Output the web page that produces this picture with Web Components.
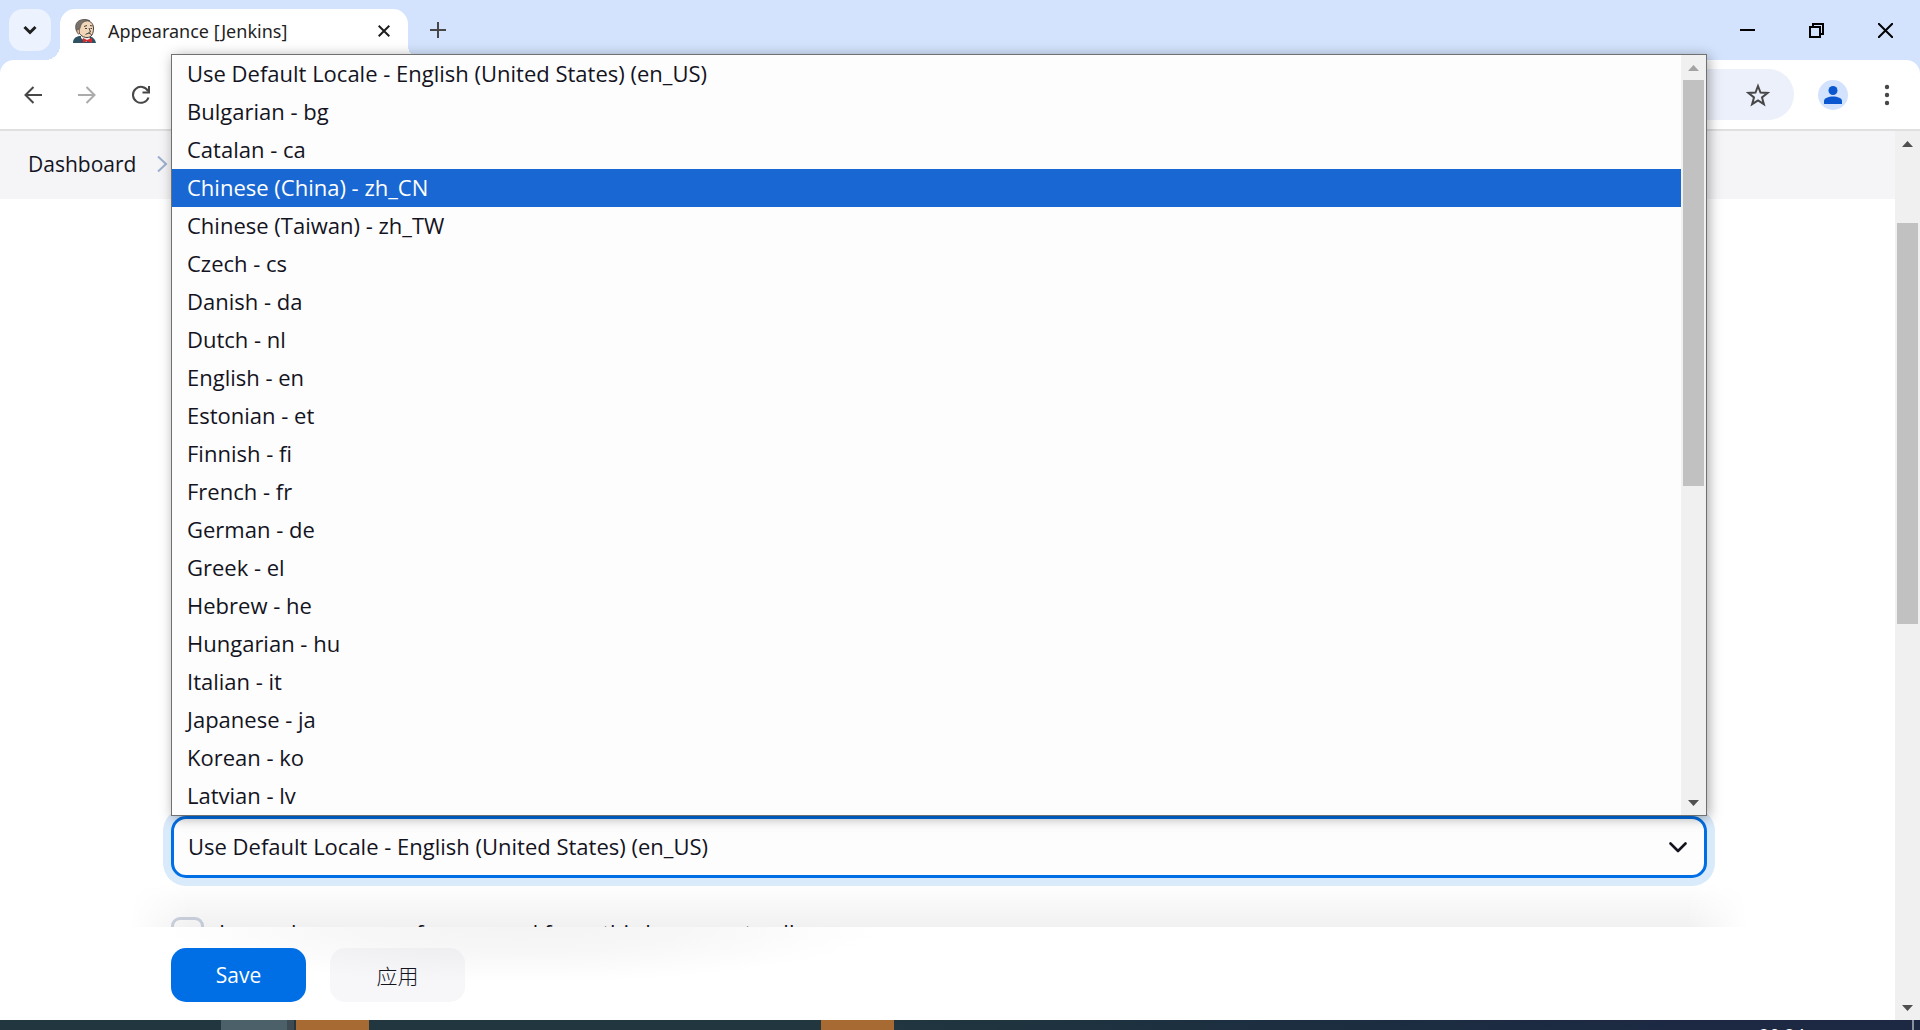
<!DOCTYPE html>
<html lang="en">
<head>
<meta charset="UTF-8">
<title>Appearance [Jenkins]</title>
<style>
    html, body {
        margin: 0;
        height: 100%;
        overflow: hidden;
    }
    body {
        display: flex;
        flex-direction: column;
        background: #d3e3fd;
        color: #14141f;
        font-family: "Open Sans", "Noto Sans", "Noto Sans CJK SC", sans-serif;
        font-size: 22px;
    }
    jenkins-page {
        flex: 1;
    }
</style>
</head>
<body>
<tab-strip><browser-tab>Appearance [Jenkins]</browser-tab></tab-strip>
<browser-toolbar></browser-toolbar>
<jenkins-page>
    <bread-crumbs slot="crumbs"><a href="#">Dashboard</a></bread-crumbs>
    <locale-select></locale-select>
    <check-row>Ignore browser preference and force this language to all users</check-row>
    <page-button slot="actions" primary>Save</page-button>
    <page-button slot="actions">应用</page-button>
</jenkins-page>
<task-bar></task-bar>

<script>
const LOCALES = [
    'Use Default Locale - English (United States) (en_US)', 'Bulgarian - bg', 'Catalan - ca',
    'Chinese (China) - zh_CN', 'Chinese (Taiwan) - zh_TW', 'Czech - cs', 'Danish - da',
    'Dutch - nl', 'English - en', 'Estonian - et', 'Finnish - fi', 'French - fr',
    'German - de', 'Greek - el', 'Hebrew - he', 'Hungarian - hu', 'Italian - it',
    'Japanese - ja', 'Korean - ko', 'Latvian - lv'
];

const BUTTON_RESET = `
    button {
        display: flex;
        align-items: center;
        justify-content: center;
        padding: 0;
        border: 0;
        background: none;
        font: inherit;
        color: inherit;
    }
    svg { display: block; }
`;

class BaseElement extends HTMLElement {
    constructor() {
        super();
        this.attachShadow({ mode: 'open' });
    }

    connectedCallback() {
        this.shadowRoot.innerHTML = this.render();
    }
}

class TabStrip extends BaseElement {
    render() {
        return `
            <style>
                ${BUTTON_RESET}
                :host {
                    display: flex;
                    height: 60px;
                    box-sizing: border-box;
                    padding: 9px 0 0 9px;
                    color: #1f1f1f;
                }
                .search {
                    width: 42px;
                    height: 42px;
                    margin-right: 9px;
                    border-radius: 14px;
                    background: #ecf3fe;
                }
                .add { width: 60px; height: 42px; }
                .controls { display: flex; margin-left: auto; height: 42px; color: #000; }
                .controls button { width: 69px; }
            </style>
            <button class="search" aria-label="Search tabs">
                <svg width="14" height="10" viewBox="0 0 14 10" fill="none" stroke="currentColor" stroke-width="3"><path d="M1.5 2l5.500 5.500L12.500 2"/></svg>
            </button>
            <slot></slot>
            <button class="add" aria-label="New tab">
                <svg width="16" height="16" viewBox="0 0 16 16" stroke="#474747" stroke-width="2"><path d="M8 0v16M0 8h16"/></svg>
            </button>
            <div class="controls">
                <button aria-label="Minimize"><svg width="15" height="15" stroke="currentColor" stroke-width="2"><path d="M0 7h15"/></svg></button>
                <button aria-label="Restore"><svg width="15" height="15" fill="none" stroke="currentColor" stroke-width="2"><path d="M1 4h10v10H1zM4 4V1h10v10h-3"/></svg></button>
                <button aria-label="Close"><svg width="15" height="15" stroke="currentColor" stroke-width="2"><path d="M0 0l15 15M15 0L0 15"/></svg></button>
            </div>
        `;
    }
}

class BrowserTab extends BaseElement {
    render() {
        return `
            <style>
                ${BUTTON_RESET}
                :host {
                    position: relative;
                    display: flex;
                    align-items: center;
                    width: 348px;
                    height: 51px;
                    box-sizing: border-box;
                    padding: 0 14px 8px 13px;
                    border-radius: 15px 15px 0 0;
                    background: #fff;
                    font-family: "Noto Sans", "Open Sans", sans-serif;
                    font-size: 18px;
                }
                /* flared corners where the tab meets the toolbar */
                :host::before, :host::after {
                    content: "";
                    position: absolute;
                    bottom: 0;
                    width: 15px;
                    height: 15px;
                }
                :host::before { right: 100%; background: radial-gradient(circle at 0 0, transparent 15px, #fff 15px); }
                :host::after { left: 100%; background: radial-gradient(circle at 100% 0, transparent 15px, #fff 15px); }
                span { flex: 1; margin-left: 12px; }
                button { width: 20px; height: 20px; }
            </style>
            <svg width="23" height="24" viewBox="0 0 23 24">
                <path d="M0 24c0-4 2-6 6-7l10 0c4 1 6 3 7 7z" fill="#2f5263"/>
                <path d="M8 16h8l1 4-4 3-5-4z" fill="#f0ede8"/>
                <path d="M4 8C4 3 8 1 12 1s8.500 3 8.500 8c0 6-2 9.500-6.500 9.500-5 0-9-4-10-10.500z" fill="#f0d5b8" stroke="#4a423c"/>
                <path d="M3 11C1 4 6 0 12 .5c2 0 4 .5 5 1.500-4-.5-7 .5-8.500 3C7.500 6.500 7.500 9 6 11l-1 3z" fill="#77726c" stroke="#4a423c" stroke-width=".6"/>
                <path d="M4 10.500c1.500-1 2.500 0 2.500 2s0 2.500-1 2.500-2-2.500-1.500-4.500z" fill="#e5bd99" stroke="#4a423c" stroke-width=".7"/>
                <path d="M11 7.500l3-1M17 6.500l2.500.5M12 9.500h2M17.500 9.500h1.500M16 9l1.500 4-2 .5M12.500 15.500c2-1.500 4-1.500 6 0" fill="none" stroke="#4a423c"/>
                <path d="M10 19l4 2 5-2v5l-5-2-4 2z" fill="#d9282e"/>
            </svg>
            <span><slot></slot></span>
            <button aria-label="Close tab">
                <svg width="12" height="12" viewBox="0 0 12 12" stroke="#1f1f1f" stroke-width="2"><path d="M.7.7l10.600 10.600M11.300.7L.7 11.300"/></svg>
            </button>
        `;
    }
}

class BrowserToolbar extends BaseElement {
    render() {
        return `
            <style>
                ${BUTTON_RESET}
                :host {
                    display: flex;
                    align-items: center;
                    height: 71px;
                    box-sizing: border-box;
                    padding: 0 6px;
                    border-bottom: 2px solid #e0e0e0;
                    border-radius: 14px 14px 0 0;
                    background: #fff;
                    color: #474747;
                }
                .nav { width: 54px; height: 54px; }
                .nav:disabled { color: #ababab; }
                .address {
                    display: flex;
                    flex: 1;
                    height: 51px;
                    margin-left: 6px;
                    margin-right: 12px;
                    border-radius: 26px;
                    background: #ecf0fa;
                }
                input { flex: 1; min-width: 0; border: 0; background: none; font: inherit; padding: 0 24px; outline: 0; }
                .star { width: 50px; margin-right: 11px; }
                .profile { width: 54px; height: 54px; }
            </style>
            <button class="nav" aria-label="Back">
                <svg width="18" height="18" viewBox="0 0 18 18" fill="none" stroke="currentColor" stroke-width="2"><path d="M18 9H1.500M9.500 1l-8 8 8 8"/></svg>
            </button>
            <button class="nav" aria-label="Forward" disabled>
                <svg width="18" height="18" viewBox="0 0 18 18" fill="none" stroke="currentColor" stroke-width="2"><path d="M0 9h16.500M8.500 1l8 8-8 8"/></svg>
            </button>
            <button class="nav" aria-label="Reload">
                <svg width="20" height="20" viewBox="0 0 20 20" fill="none" stroke="currentColor" stroke-width="2"><path d="M17.500 12.500A8 8 0 1 1 17 6M18 1v6.500h-6.500"/></svg>
            </button>
            <div class="address">
                <input type="text" aria-label="Address">
                <button class="star" aria-label="Bookmark">
                    <svg width="24" height="24" viewBox="0 0 24 24" fill="none" stroke="currentColor" stroke-width="2"><path d="M12 3l2.500 6.500 7 .4-5.500 4.500 1.900 6.800-5.900-3.800-5.900 3.800L8 14.400 2.500 9.900l7-.4z"/></svg>
                </button>
            </div>
            <button class="profile" aria-label="Profile">
                <svg width="30" height="30" viewBox="0 0 30 30"><circle cx="15" cy="15" r="15" fill="#d3e3fd"/><g fill="#0b57d0"><circle cx="15" cy="10.500" r="4.500"/><path d="M6 24v-3c0-6 18-6 18 0v3z"/></g></svg>
            </button>
            <button class="nav" aria-label="Menu">
                <svg width="6" height="22" viewBox="0 0 6 22" fill="currentColor"><circle cx="3" cy="3" r="2.200"/><circle cx="3" cy="11" r="2.200"/><circle cx="3" cy="19" r="2.200"/></svg>
            </button>
        `;
    }
}

class ScrollBar extends BaseElement {
    render() {
        const before = this.getAttribute('before');
        const size = this.getAttribute('size');
        const after = this.getAttribute('after');
        return `
            <style>
                ${BUTTON_RESET}
                :host {
                    display: flex;
                    flex-direction: column;
                    flex: none;
                    width: 25px;
                    background: #f0f0f0;
                    color: #505050;
                }
                button { width: 25px; height: 25px; flex: none; }
                button:disabled { color: #a3a3a3; }
                .before { flex: ${before}; }
                .thumb { flex: ${size}; margin: 0 2px; background: #c1c1c1; }
                .after { flex: ${after}; }
            </style>
            <button aria-label="Scroll up" ${before === '0' ? 'disabled' : ''}>
                <svg width="11" height="6" fill="currentColor"><path d="M0 6l5.500-6L11 6z"/></svg>
            </button>
            <div class="before"></div>
            <div class="thumb"></div>
            <div class="after"></div>
            <button aria-label="Scroll down">
                <svg width="11" height="6" fill="currentColor"><path d="M0 0h11L5.500 6z"/></svg>
            </button>
        `;
    }
}

class JenkinsPage extends BaseElement {
    render() {
        return `
            <style>
                :host { display: flex; min-height: 0; background: #fff; }
                .page { flex: 1; min-width: 0; display: flex; flex-direction: column; }
                .form {
                    flex: 1;
                    min-height: 0;
                    display: flex;
                    flex-direction: column;
                    justify-content: flex-end;
                    padding: 0 188px 0 171px;
                }
                .actions {
                    position: relative;
                    display: flex;
                    gap: 24px;
                    padding: 21px 171px 18px;
                    background: radial-gradient(ellipse 360px 56px at 520px 0, #f4f4f4, #f7f7f7 45%, #fff);
                }
                /* soft shade cast on the form by the sticky bar */
                .shade {
                    position: absolute;
                    left: 130px;
                    right: 148px;
                    bottom: 100%;
                    height: 44px;
                    background: linear-gradient(rgba(0, 0, 0, 0), rgba(0, 0, 0, .055));
                    -webkit-mask-image: linear-gradient(90deg, transparent, #000 60px, #000 calc(100% - 60px), transparent);
                    mask-image: linear-gradient(90deg, transparent, #000 60px, #000 calc(100% - 60px), transparent);
                    pointer-events: none;
                }
            </style>
            <div class="page">
                <slot name="crumbs"></slot>
                <div class="form"><slot></slot></div>
                <div class="actions"><div class="shade"></div><slot name="actions"></slot></div>
            </div>
            <scroll-bar before="67" size="401" after="371"></scroll-bar>
        `;
    }
}

class BreadCrumbs extends BaseElement {
    render() {
        return `
            <style>
                :host {
                    display: flex;
                    align-items: center;
                    gap: 21px;
                    height: 68px;
                    box-sizing: border-box;
                    padding: 0 0 2px 28px;
                    background: #f5f5f8;
                    font-size: 21px;
                }
                ::slotted(a) { color: inherit; text-decoration: none; }
            </style>
            <slot></slot>
            <svg width="11" height="18" viewBox="0 0 11 18" fill="none" stroke="#9bb0cc" stroke-width="2"><path d="M1 1.500L9 9l-8 7.500"/></svg>
        `;
    }
}

class LocaleSelect extends BaseElement {
    render() {
        return `
            <style>
                :host { position: relative; display: block; z-index: 2; }
                select {
                    display: block;
                    appearance: none;
                    width: 100%;
                    height: 62px;
                    box-sizing: border-box;
                    padding: 0 14px 2px;
                    border: 3px solid #006fe6;
                    border-radius: 15px;
                    outline: 0;
                    background: #fdfdfe;
                    box-shadow: 0 0 0 8px #d9eafb;
                    font: inherit;
                    color: inherit;
                }
                svg { position: absolute; right: 20px; bottom: 25px; pointer-events: none; }
                locale-popup { position: absolute; left: 0; right: 0; bottom: 100%; }
            </style>
            <select aria-label="Default Language">
                ${LOCALES.map(name => `<option>${name}</option>`).join('')}
            </select>
            <svg width="18" height="11" viewBox="0 0 18 11" fill="none" stroke="#14141f" stroke-width="2.600" stroke-linecap="round" stroke-linejoin="round"><path d="M1.500 1.500L9 9l7.500-7.500"/></svg>
            <locale-popup active="3"></locale-popup>
        `;
    }
}

class LocalePopup extends BaseElement {
    render() {
        const active = Number(this.getAttribute('active'));
        return `
            <style>
                :host {
                    display: flex;
                    border: 1px solid #707070;
                    background: #fdfdfd;
                    box-shadow: 2px 2px 12px rgba(0, 0, 0, .35);
                }
                ul { flex: 1; margin: 0; padding: 0; list-style: none; }
                li { height: 38px; line-height: 36px; padding-left: 15px; }
                li[aria-selected="true"] { background: #1967d2; color: #fff; }
            </style>
            <ul role="listbox" aria-label="Default Language">
                ${LOCALES.map((name, i) => `<li role="option" aria-selected="${i === active}">${name}</li>`).join('')}
            </ul>
            <scroll-bar before="0" size="406" after="304"></scroll-bar>
        `;
    }
}

class CheckRow extends BaseElement {
    render() {
        return `
            <style>
                /* only the top of the row shows above the sticky bar */
                :host { display: block; height: 49px; overflow: hidden; }
                label { display: flex; align-items: flex-start; gap: 15px; line-height: 30px; padding-top: 39px; }
                input {
                    appearance: none;
                    width: 33px;
                    height: 33px;
                    box-sizing: border-box;
                    margin: 0;
                    border: 3px solid #cfd6e2;
                    border-radius: 9px;
                }
            </style>
            <label><input type="checkbox"><slot></slot></label>
        `;
    }
}

class PageButton extends BaseElement {
    render() {
        const primary = this.hasAttribute('primary');
        return `
            <style>
                ${BUTTON_RESET}
                :host { display: block; }
                button {
                    width: 135px;
                    height: 54px;
                    border-radius: 15px;
                    background: ${primary ? '#006fe6' : 'rgba(20, 20, 90, .035)'};
                    color: ${primary ? '#fff' : 'inherit'};
                    font-size: 21px;
                    font-weight: ${primary ? 500 : 300};
                }
            </style>
            <button type="button"><slot></slot></button>
        `;
    }
}

class TaskBar extends BaseElement {
    render() {
        return `
            <style>
                :host {
                    display: flex;
                    height: 10px;
                    overflow: hidden;
                    background: linear-gradient(90deg, #21363f 45%, #1c2e40 67%, #1d2843 92%);
                    color: #fff;
                    font-size: 18px;
                    line-height: 24px;
                }
                .window { width: 66px; margin-left: 221px; background: #4c6069; }
                .stack { width: 7px; background: #3e4a51; }
                .app { width: 73px; margin-left: 2px; background: #a86a33; }
                .app.second { margin-left: 452px; }
                .clock { margin-left: auto; margin-right: 107px; padding-top: 3px; }
                .peek { width: 2px; margin-right: 6px; background: #8a909c; }
            </style>
            <div class="window"></div>
            <div class="stack"></div>
            <div class="app"></div>
            <div class="app second"></div>
            <time class="clock">20:24</time>
            <div class="peek"></div>
        `;
    }
}

customElements.define('scroll-bar', ScrollBar);
customElements.define('tab-strip', TabStrip);
customElements.define('browser-tab', BrowserTab);
customElements.define('browser-toolbar', BrowserToolbar);
customElements.define('bread-crumbs', BreadCrumbs);
customElements.define('locale-popup', LocalePopup);
customElements.define('locale-select', LocaleSelect);
customElements.define('check-row', CheckRow);
customElements.define('page-button', PageButton);
customElements.define('jenkins-page', JenkinsPage);
customElements.define('task-bar', TaskBar);
</script>
</body>
</html>
